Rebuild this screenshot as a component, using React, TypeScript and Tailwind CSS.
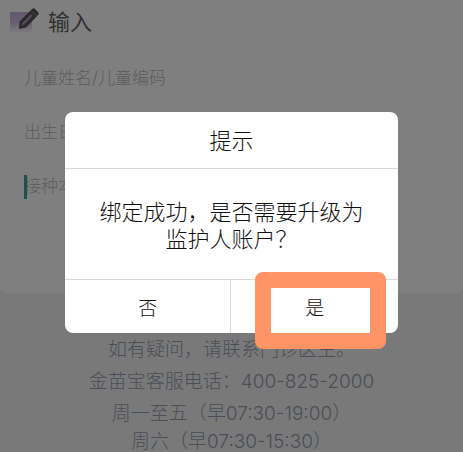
const fields = [
  { id: "child", label: "儿童姓名/儿童编码" },
  { id: "birthday", label: "出生日期" },
  { id: "booklet", label: "接种本条码" },
];

const PencilIcon = () => (
  <svg className="h-8 w-8" viewBox="0 0 32 32" aria-hidden="true">
    <defs>
      <linearGradient id="patch" x1="0" y1="0" x2="0" y2="1">
        <stop offset="0" stopColor="#c6b2e2" />
        <stop offset="0.5" stopColor="#cdbfe0" />
        <stop offset="1" stopColor="#f6f4f8" />
      </linearGradient>
    </defs>
    <rect x="2" y="8" width="22" height="20" fill="url(#patch)" />
    <path
      d="M11.500 17.500 L24 5 Q25.500 3.500 27 5 L30 8 Q31.500 9.500 30 11 L18 23.500 L11 25 Z"
      fill="#56515c"
    />
    <path d="M14 19.500 L23 10 L25 12 L16.500 21.500 L13.500 22 Z" fill="#777080" />
    <path d="M14.500 20.500 L23.500 11" stroke="#b5aebf" strokeWidth="1.200" />
    <path d="M23.500 7 L28.500 12" stroke="#a8a2b0" strokeWidth="0.800" />
  </svg>
);

const InputForm = () => (
  <section className="rounded-b-lg bg-white pb-20">
    <h1 className="flex h-12 items-center gap-2 pl-2 text-[22px] text-[#606060]">
      <span className="pb-2">
        <PencilIcon />
      </span>
      <span className="pb-1">输入</span>
    </h1>
    <div className="mt-1 px-5">
      {fields.map((field) => (
        <div key={field.id} className="relative flex h-[54px] items-center border-b border-[#fcfcfc]">
          <input
            id={field.id}
            aria-label={field.label}
            placeholder={field.label}
            className="w-full bg-transparent pl-1 text-[17px] font-light outline-none placeholder:text-[#bbbbbb]"
          />
          {/* Active field caret */}
          {field.id === "booklet" && (
            <span className="absolute left-1 h-6 w-[3px] bg-[#3aa392]" />
          )}
        </div>
      ))}
    </div>
  </section>
);

const Contact = () => (
  <footer className="mt-10 text-center text-[19px] leading-8 font-light text-[#959eae]">
    <p>如有疑问，请联系门诊医生。</p>
    <p>金苗宝客服电话：400-825-2000</p>
    <p>周一至五（早07:30-19:00）</p>
    <p className="leading-6">周六（早07:30-15:30）</p>
  </footer>
);

const ConfirmDialog = () => (
  <div
    role="dialog"
    aria-modal="true"
    aria-labelledby="dialog-title"
    className="w-[72%] rounded-lg bg-white font-light text-[#111111]"
  >
    <h2 id="dialog-title" className="flex h-14 items-center justify-center pt-1 text-[22px]">
      提示
    </h2>
    <p className="flex h-28 items-center justify-center border-y border-[#d9d9d9] px-8 pt-1 text-center text-[22px] leading-[27px]">
      绑定成功，是否需要升级为监护人账户？
    </p>
    <div className="grid h-[53px] grid-cols-2 text-[19px]">
      <button type="button" className="border-r border-[#d9d9d9] pt-1.5">
        否
      </button>
      <button type="button" className="relative pt-1.5">
        是
        {/* Highlight frame */}
        <span className="absolute -top-2 -bottom-4 left-6 right-3 rounded-lg border-16 border-[#ff9466]" />
      </button>
    </div>
  </div>
);

export default function App() {
  return (
    <div className="relative h-screen overflow-hidden bg-[#f3f3f3] font-['Inter','Noto_Sans_CJK_SC',sans-serif]">
      <InputForm />
      <Contact />
      <div className="absolute inset-0 flex items-center justify-center bg-black/50 pb-2">
        <ConfirmDialog />
      </div>
    </div>
  );
}
